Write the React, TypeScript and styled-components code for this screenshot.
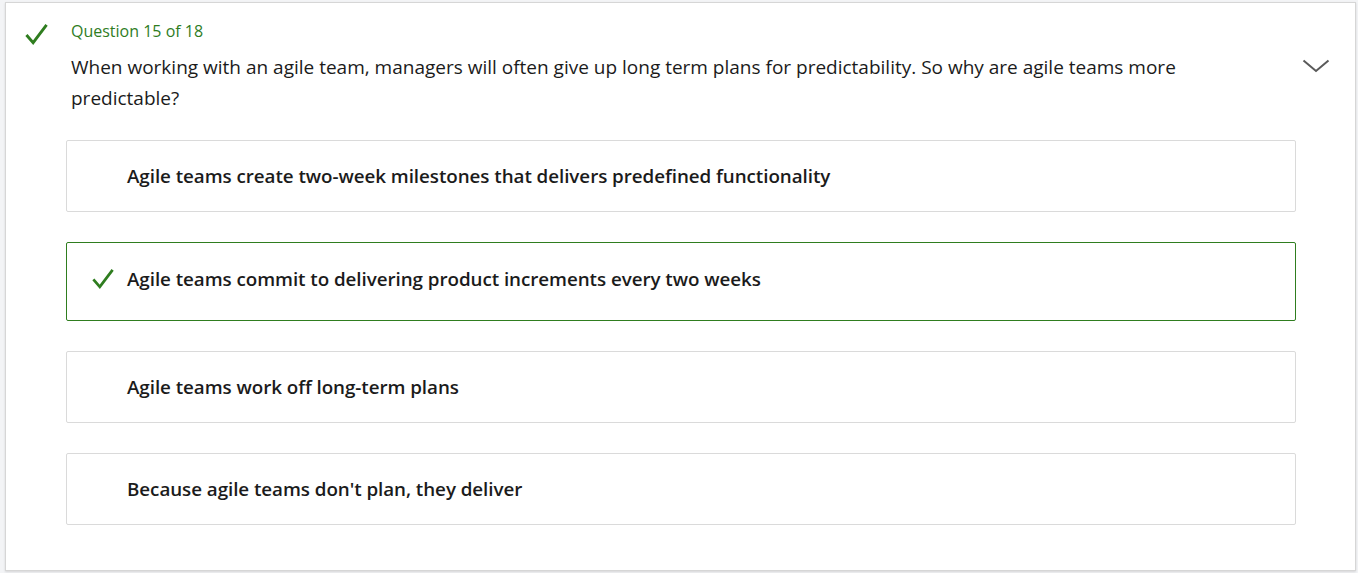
import styled, { createGlobalStyle } from 'styled-components';

const GlobalStyle = createGlobalStyle`
  html, body {
    margin: 0;
    padding: 0;
    background: #f3f4f6;
    font-family: 'Open Sans', 'Noto Sans', sans-serif;
  }
`;

const Page = styled.div`
  padding: 2px 2px 2px 5px;
  height: 573px;
  box-sizing: border-box;
`;

const Card = styled.div`
  background: #fff;
  border: 1px solid #d6d6d6;
  box-shadow: 0 1px 2px rgba(0, 0, 0, 0.12);
  height: 569px;
  box-sizing: border-box;
  display: grid;
  grid-template-columns: 65px 1fr 60px;
  padding-top: 17px;
`;

const StatusCell = styled.div`
  padding: 3px 0 0 19px;
`;

const Body = styled.div`
  display: flex;
  flex-direction: column;
`;

const Counter = styled.div`
  color: #2f7d1f;
  font-size: 16px;
  line-height: 22px;
  margin-bottom: 10px;
`;

const Prompt = styled.div`
  color: #1b1b1b;
  font-size: 19px;
  line-height: 31px;
  padding-right: 40px;
`;

const Options = styled.div`
  display: flex;
  flex-direction: column;
  gap: 30px;
  margin: 26px 0 0 -5px;
`;

const Option = styled.div<{ $correct?: boolean }>`
  display: flex;
  align-items: center;
  gap: 13px;
  height: ${(p) => (p.$correct ? '79px' : '72px')};
  box-sizing: border-box;
  border: 1px solid ${(p) => (p.$correct ? '#2f7d1f' : '#dadada')};
  border-radius: 2px;
  padding: ${(p) => (p.$correct ? '0 0 5px 24px' : '0 0 0 24px')};
  margin-right: -1px;
`;

const Mark = styled.div`
  width: 23px;
  display: flex;
  justify-content: center;
`;

const OptionText = styled.span`
  color: #1b1b1b;
  font-size: 18.8px;
  font-weight: 600;
  letter-spacing: -0.05px;
`;

const Toggle = styled.div`
  padding: 36px 0 0 7px;
`;

const Check = ({ size }: { size: number }) => (
  <svg width={size} height={size} viewBox="0 0 24 24" fill="none">
    <path d="M1.5 12.5 L8.5 20.5 L22.5 2" stroke="#2f7d1f" strokeWidth="3" />
  </svg>
);

const answers = [
  { text: 'Agile teams create two-week milestones that delivers predefined functionality' },
  { text: 'Agile teams commit to delivering product increments every two weeks', correct: true },
  { text: 'Agile teams work off long-term plans' },
  { text: "Because agile teams don't plan, they deliver" },
];

const App = () => (
  <>
    <GlobalStyle />
    <Page>
      <Card>
        <StatusCell>
          <Check size={23} />
        </StatusCell>
        <Body>
          <Counter>Question 15 of 18</Counter>
          <Prompt>
            When working with an agile team, managers will often give up long term plans for predictability. So why
            are agile teams more predictable?
          </Prompt>
          <Options>
            {answers.map((a) => (
              <Option key={a.text} $correct={a.correct}>
                <Mark>{a.correct && <Check size={22} />}</Mark>
                <OptionText>{a.text}</OptionText>
              </Option>
            ))}
          </Options>
        </Body>
        <Toggle>
          <svg width="28" height="14" viewBox="0 0 28 14" fill="none">
            <path d="M1.5 1.5 L14 12 L26.5 1.5" stroke="#5a5a5a" strokeWidth="2" />
          </svg>
        </Toggle>
      </Card>
    </Page>
  </>
);

export default App;
